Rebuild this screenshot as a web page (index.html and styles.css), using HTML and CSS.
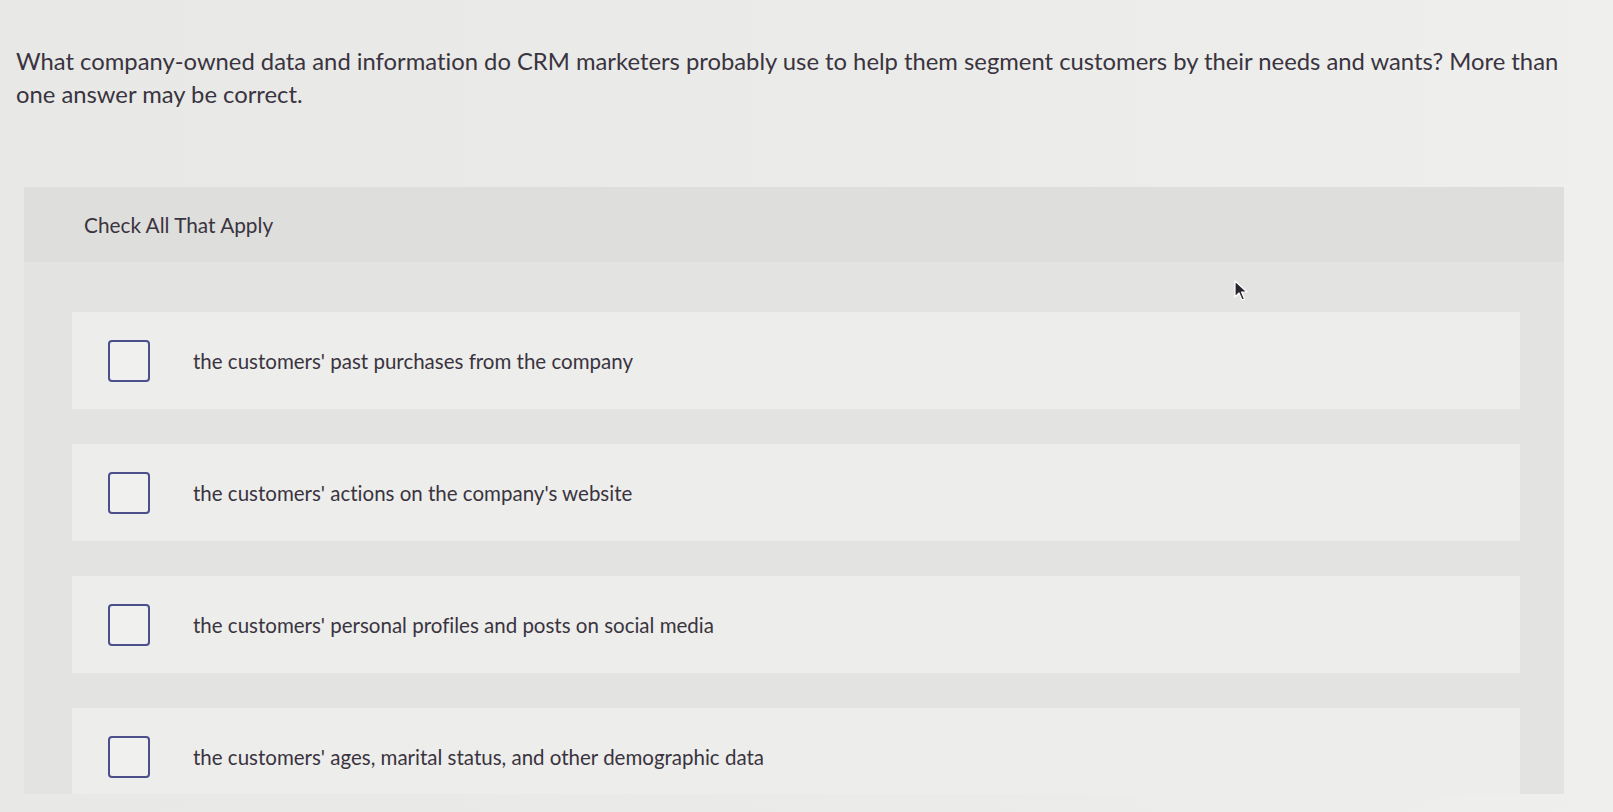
FILE: index.html
```html
<!DOCTYPE html>
<html lang="en">
<head>
<meta charset="utf-8">
<title>Check All That Apply</title>
<link rel="stylesheet" href="styles.css">
</head>
<body>
<div class="page">
  <p class="question">What company-owned data and information do CRM marketers probably use to help them segment customers by their needs and wants? More than one answer may be correct.</p>
  <section class="panel">
    <div class="panel-head">Check All That Apply</div>
    <div class="panel-body">
      <label class="option"><span class="box"></span><span class="label">the customers' past purchases from the company</span></label>
      <label class="option"><span class="box"></span><span class="label">the customers' actions on the company's website</span></label>
      <label class="option"><span class="box"></span><span class="label">the customers' personal profiles and posts on social media</span></label>
      <label class="option"><span class="box"></span><span class="label">the customers' ages, marital status, and other demographic data</span></label>
    </div>
  </section>
  <svg class="cursor" width="16" height="22" viewBox="0 0 16 22"><path d="M2 1 L2 17 L6 13 L9 20 L11.5 19 L8.5 12 L14 12 Z" fill="#2a2430" stroke="#ffffff" stroke-width="1.2" stroke-linejoin="round"/></svg>
</div>
</body>
</html>
```
FILE: styles.css
```css
* { box-sizing: border-box; }
html, body { margin: 0; padding: 0; }
body {
  background: #e9e9e7;
  font-family: "Lato", "Open Sans", "Liberation Sans", sans-serif;
  font-variant-ligatures: none;
  color: #3a3440;
  width: 1613px;
  height: 812px;
  overflow: hidden;
}
.page {
  position: relative;
  height: 812px;
  background: linear-gradient(90deg, #e8e8e6 0%, #ebebe9 60%, #efefed 100%);
}
.question {
  margin: 0;
  padding: 45px 40px 0 16px;
  font-size: 23.8px;
  line-height: 33px;
}
.panel {
  margin: 76px 49px 0 24px;
}
.panel-head {
  height: 75px;
  background: #dededc;
  display: flex;
  align-items: center;
  padding-left: 60px;
  font-size: 20.8px;
}
.panel-body {
  background: #e3e3e1;
  height: 532px;
  overflow: hidden;
  padding: 50px 44px 0 48px;
  display: flex;
  flex-direction: column;
  gap: 35px;
}
.option {
  flex: 0 0 97px;
  background: #ededeb;
  display: flex;
  align-items: center;
  padding-left: 36px;
  font-size: 20.5px;
}
.box {
  width: 42px;
  height: 42px;
  border: 2.5px solid #4b4f8c;
  border-radius: 4px;
  background: #f0f0ee;
  margin-right: 43px;
  flex: 0 0 auto;
}
.cursor {
  position: absolute;
  left: 1233px;
  top: 280px;
}
```
